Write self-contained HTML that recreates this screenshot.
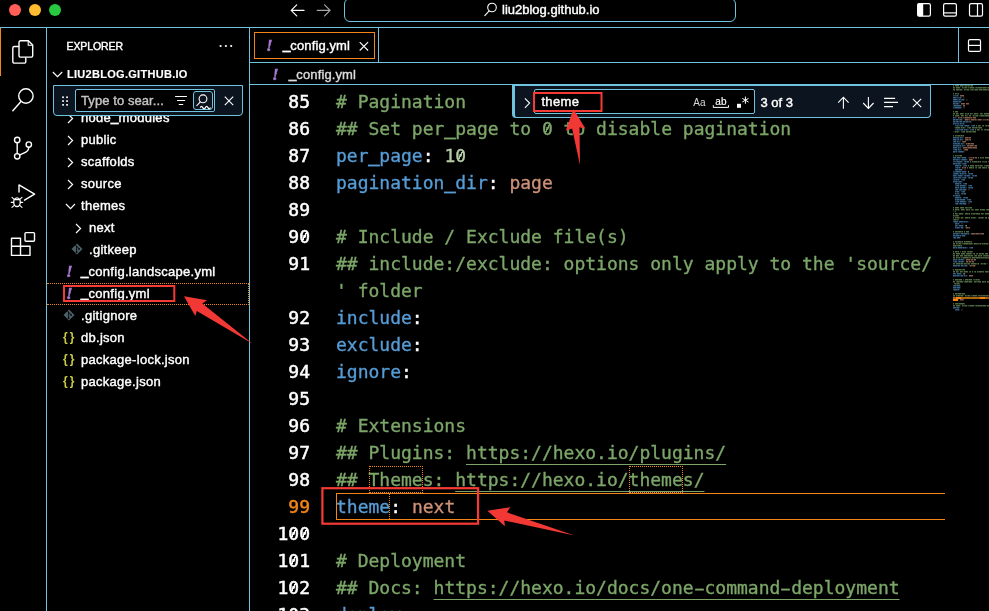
<!DOCTYPE html>
<html lang="en">
<head>
<meta charset="utf-8">
<title>_config.yml — liu2blog.github.io</title>
<style>
*{box-sizing:border-box;margin:0;padding:0}
html,body{width:989px;height:611px;overflow:hidden;background:#000}
#root{position:absolute;left:0;top:0;width:989px;height:611px;will-change:transform;transform:translateZ(0)}
body{position:relative;font-family:"Liberation Sans",sans-serif;font-size:13px;color:#fff;-webkit-font-smoothing:antialiased;-webkit-text-stroke:0.4px}
.abs{position:absolute}
.line{position:absolute;background:#6fc3df}
/* title bar */
.tl{position:absolute;top:4px;width:12px;height:12px;border-radius:50%}
#cmd{position:absolute;left:344px;top:-2px;width:392px;height:24px;border:1px solid #6fc3df;border-radius:6px}
#cmd span{position:absolute;left:157px;top:3px;font-size:13px;white-space:nowrap}
/* sidebar */
.row{position:absolute;left:47px;width:202px;height:22px;line-height:22px;white-space:nowrap}
.row .lbl{position:absolute;top:0;letter-spacing:0.28px}
.ic{position:absolute}
.yml{position:absolute;top:0;font-family:"Liberation Serif",serif;font-style:italic;font-weight:bold;font-size:17px;color:#a978cf;-webkit-text-stroke:0.5px}
.json{position:absolute;top:-1.500px;font-size:12px;font-weight:bold;color:#cbcb41;letter-spacing:-0.2px;-webkit-text-stroke:0}
.us{position:relative;top:-1.500px;-webkit-text-stroke:0.9px}
/* editor */
#code{position:absolute;left:250px;top:85px;width:703px;height:526px;overflow:hidden;font-family:"DejaVu Sans Mono","Liberation Mono",monospace;font-size:18px;line-height:27px;-webkit-text-stroke:0.35px}
.ln{position:absolute;left:0;width:60px;text-align:right;height:27px;color:#fff;-webkit-text-stroke:0.5px}
.cl{position:absolute;left:86px;height:27px;white-space:pre}
.cu{position:relative;top:-0.500px;-webkit-text-stroke:1.100px}
.hy{display:inline-block;font-style:normal;transform:scaleX(1.750);text-decoration:inherit}
.z{font-weight:inherit;background:linear-gradient(to bottom right,transparent 42%,currentColor 42%,currentColor 58%,transparent 58%) 2.900px 6.200px/5px 8.800px no-repeat}
.c{color:#7ca668}.k{color:#569cd6}.s{color:#ce9178}.n{color:#b5cea8}.u{text-decoration:underline;text-underline-offset:5px;text-decoration-thickness:1px;text-decoration-skip-ink:none}
</style>
</head>
<body>
<div id="root">
<!-- TITLE BAR -->
<div class="tl" style="left:9px;background:#ff5f57"></div>
<div class="tl" style="left:29px;background:#febc2e"></div>
<div class="tl" style="left:49px;background:#28c840"></div>
<div id="cmd"><span>liu2blog.github.io</span></div>
<svg class="abs" style="left:286px;top:2px" width="50" height="18" viewBox="286 2 50 18" fill="none" stroke-width="1.2" stroke-linecap="round" stroke-linejoin="round">
<path d="M304 10.400H291.300M296.700 4.900L291.200 10.400L296.700 15.900" stroke="#fff"/>
<path d="M317.300 10.400H330M324.600 4.900L330.100 10.400L324.600 15.900" stroke="#a8a8a8"/>
</svg>
<svg class="abs" style="left:483px;top:1px" width="16" height="17" viewBox="483 1 16 17" fill="none" stroke="#fff" stroke-width="1.100" stroke-linecap="round"><circle cx="492" cy="7.500" r="4.300"/><path d="M489.200 10.800L484.800 15.600"/></svg>
<svg class="abs" style="left:915px;top:1px" width="72" height="18" viewBox="915 1 72 18" fill="none" stroke="#fff" stroke-width="1.200">
<rect x="917.600" y="3.600" width="12.800" height="12.600" rx="1.600"/><path d="M917.600 4.600a1 1 0 0 1 1-1h4.600v12.600h-4.600a1 1 0 0 1-1-1z" fill="#fff" stroke="none"/>
<rect x="943.600" y="3.600" width="12.800" height="12.600" rx="1.600"/><path d="M943.600 12.900h12.800"/>
<rect x="969.500" y="3.600" width="13" height="12.600" rx="1.600"/><path d="M977.500 3.600v12.600"/>
</svg>
<div class="line" style="left:0;top:27px;width:989px;height:1px"></div>

<!-- ACTIVITY BAR -->
<div class="abs" style="left:0;top:28px;width:1px;height:48px;background:#f38518"></div>
<div class="line" style="left:46px;top:28px;width:1px;height:583px"></div>
<svg class="abs" style="left:0;top:28px" width="46" height="250" viewBox="0 28 46 250" fill="none" stroke="#fff" stroke-width="1.4" stroke-linejoin="round" stroke-linecap="round">
<!-- files -->
<path d="M18.7 46.5H14.4a1.6 1.6 0 0 0-1.6 1.6v13.4a1.6 1.6 0 0 0 1.6 1.6h9.8a1.6 1.6 0 0 0 1.6-1.6v-3.6"/>
<path d="M20.6 40.8h7.8l4.3 4.3v10.4a1.6 1.6 0 0 1-1.6 1.6H20.6a1.6 1.6 0 0 1-1.6-1.6V42.4a1.6 1.6 0 0 1 1.600-1.600z"/>
<path d="M28.2 41v4.300h4.300" stroke-width="1.100"/>
<!-- search -->
<circle cx="25.900" cy="96" r="7.200"/>
<path d="M20.800 101.700L12.800 110.700"/>
<!-- source control -->
<circle cx="17.200" cy="140" r="2.700"/>
<circle cx="17.200" cy="156.300" r="2.700"/>
<circle cx="28.800" cy="144.600" r="2.700"/>
<path d="M17.200 142.700v10.900M28.800 147.300c0 4.500-4 5.200-8.900 7.600"/>
<!-- debug -->
<path d="M19 192V184.900L34.600 194.200L24.500 200.200"/>
<ellipse cx="17" cy="202.200" rx="3.300" ry="4.300" stroke-width="1.300"/>
<path d="M14.200 199.300L12 197.300M19.800 199.300L22 197.300M13.600 202.400H11.300M20.400 202.400H22.700M14.300 205.300L12 207.300M19.700 205.300L22 207.300M14.500 199.600h5" stroke-width="1.100"/>
<!-- extensions -->
<path d="M11.500 238.200h9v8h9.500v9.200h-18.500zM20.500 246.200v9.200M11.500 246.200h9"/>
<rect x="25" y="232.600" width="9.500" height="8.700" rx="1"/>
</svg>

<!-- SIDEBAR -->
<div class="abs" style="left:66.500px;top:40px;font-size:10.500px;letter-spacing:-0.1px">EXPLORER</div>
<svg class="abs" style="left:219px;top:44px" width="14" height="4" viewBox="0 0 14 4"><circle cx="1.6" cy="2" r="1.1" fill="#fff"/><circle cx="6.9" cy="2" r="1.1" fill="#fff"/><circle cx="12.2" cy="2" r="1.1" fill="#fff"/></svg>
<svg class="abs" style="left:52px;top:71px" width="11" height="7" viewBox="0 0 11 7"><path d="M.8 1l4.7 4.7L10.2 1" fill="none" stroke="#fff" stroke-width="1.15"/></svg>
<div class="abs" style="left:67px;top:68px;font-size:11px;font-weight:bold;letter-spacing:0.29px;-webkit-text-stroke:0.15px">LIU2BLOG.GITHUB.IO</div>
<!--SIDE-START-->
<div class="row" style="top:107px"><svg class="ic" style="left:20px;top:5.500px" width="7" height="11" viewBox="0 0 7 11"><path d="M1 1l4.6 4.5L1 10" fill="none" stroke="#fff" stroke-width="1.15"/></svg><span class="lbl" style="left:34px">node<span class="us">_</span>modules</span></div>
<div class="row" style="top:129px"><svg class="ic" style="left:20px;top:5.500px" width="7" height="11" viewBox="0 0 7 11"><path d="M1 1l4.6 4.5L1 10" fill="none" stroke="#fff" stroke-width="1.15"/></svg><span class="lbl" style="left:34px">public</span></div>
<div class="row" style="top:151px"><svg class="ic" style="left:20px;top:5.500px" width="7" height="11" viewBox="0 0 7 11"><path d="M1 1l4.6 4.5L1 10" fill="none" stroke="#fff" stroke-width="1.15"/></svg><span class="lbl" style="left:34px">scaffolds</span></div>
<div class="row" style="top:173px"><svg class="ic" style="left:20px;top:5.500px" width="7" height="11" viewBox="0 0 7 11"><path d="M1 1l4.6 4.5L1 10" fill="none" stroke="#fff" stroke-width="1.15"/></svg><span class="lbl" style="left:34px">source</span></div>
<div class="row" style="top:195px"><svg class="ic" style="left:18px;top:8px" width="11" height="7" viewBox="0 0 11 7"><path d="M1 1l4.5 4.6L10 1" fill="none" stroke="#fff" stroke-width="1.15"/></svg><span class="lbl" style="left:34px">themes</span></div>
<div class="row" style="top:217px"><svg class="ic" style="left:28px;top:5.500px" width="7" height="11" viewBox="0 0 7 11"><path d="M1 1l4.6 4.5L1 10" fill="none" stroke="#fff" stroke-width="1.15"/></svg><span class="lbl" style="left:42px">next</span></div>
<div class="row" style="top:239px"><svg class="ic" style="left:23.6px;top:4.300px" width="12" height="12" viewBox="0 0 12 12"><path d="M6 .5L11.500 6 6 11.500.5 6z" fill="#4b6069"/><g stroke="#000" stroke-width=".9" fill="none"><path d="M5.600 2.600V9.200M4.300 1.900L8 5.600"/></g><circle cx="8.100" cy="5.900" r=".9" fill="#000"/><circle cx="5.600" cy="9" r=".9" fill="#000"/></svg><span class="lbl" style="left:42px">.gitkeep</span></div>
<div class="row" style="top:261px"><span class="yml" style="left:19px">!</span><span class="lbl" style="left:34px"><span class="us">_</span>config.landscape.yml</span></div>
<div class="row" style="top:283px"><span class="yml" style="left:19px">!</span><span class="lbl" style="left:34px"><span class="us">_</span>config.yml</span></div>
<div class="row" style="top:305px"><svg class="ic" style="left:15.6px;top:4.300px" width="12" height="12" viewBox="0 0 12 12"><path d="M6 .5L11.500 6 6 11.500.5 6z" fill="#4b6069"/><g stroke="#000" stroke-width=".9" fill="none"><path d="M5.600 2.600V9.200M4.300 1.900L8 5.600"/></g><circle cx="8.100" cy="5.900" r=".9" fill="#000"/><circle cx="5.600" cy="9" r=".9" fill="#000"/></svg><span class="lbl" style="left:34px">.gitignore</span></div>
<div class="row" style="top:327px"><span class="json" style="left:16px">{&#8201;}</span><span class="lbl" style="left:34px">db.json</span></div>
<div class="row" style="top:349px"><span class="json" style="left:16px">{&#8201;}</span><span class="lbl" style="left:34px">package-lock.json</span></div>
<div class="row" style="top:371px"><span class="json" style="left:16px">{&#8201;}</span><span class="lbl" style="left:34px">package.json</span></div>
<!--SIDE-END-->
<div class="abs" style="left:47px;top:283px;width:202px;height:22px;border-top:1px dotted #f38518;border-bottom:1px dotted #f38518;border-right:1px dotted #f38518"></div>
<!-- tree find widget -->
<div class="abs" id="tfind" style="left:53px;top:85px;width:190px;height:31px;background:#0c141f;border:1px solid #6fc3df;border-radius:0 0 4px 4px">
 <div class="abs" style="left:21px;top:3px;width:140px;height:23px;background:#000;border:1px solid #6fc3df;border-radius:2px"></div>
 <div class="abs" style="left:27px;top:7px;color:#c4c4c4;letter-spacing:0.08px;white-space:nowrap">Type to sear...</div>
 <div class="abs" style="left:139px;top:5px;width:20px;height:19px;border:1px solid #6fc3df;border-radius:3px;background:#0c141f"></div>
 <svg class="abs" style="left:0;top:0" width="188" height="29" viewBox="54 86 188 29" fill="none" stroke="#fff" stroke-width="1.100">
  <g fill="#fff" stroke="none"><rect x="62.200" y="96.400" width="1.700" height="1.700"/><rect x="66.200" y="96.400" width="1.700" height="1.700"/><rect x="62.200" y="100.200" width="1.700" height="1.700"/><rect x="66.200" y="100.200" width="1.700" height="1.700"/><rect x="62.200" y="104" width="1.700" height="1.700"/><rect x="66.200" y="104" width="1.700" height="1.700"/></g>
  <path d="M175.100 96.500h11.800M177 100.500h8.200M178.800 104.500h4.400"/>
  <circle cx="203" cy="98.800" r="3.900" stroke-width="1.100"/><path d="M200.300 101.800L196.500 106" stroke-width="1.100"/><path d="M200.200 107.600q1.300-2.400 2.600 0t2.600 0t2.600 0t2.500 0" stroke-width="1.200"/>
  <path d="M224.800 96.700l8.400 8.400M233.200 96.700l-8.400 8.400"/>
 </svg>
</div>
<div class="line" style="left:249px;top:28px;width:1px;height:583px"></div>

<!-- TABS -->
<div class="line" style="left:250px;top:62px;width:739px;height:1px"></div>
<div class="line" style="left:378px;top:28px;width:1px;height:34px"></div>
<div class="line" style="left:958px;top:28px;width:1px;height:34px"></div>
<div class="abs" style="left:254px;top:32px;width:121px;height:27px;border:1px solid #f38518"></div>
<span class="yml" style="left:266px;top:36px">!</span>
<div class="abs" style="left:283px;top:38px;letter-spacing:0.12px"><span class="us">_</span>config.yml</div>
<svg class="abs" style="left:358px;top:41px" width="12" height="11" viewBox="0 0 12 11"><path d="M1.700 1.100l8.400 8.400M10.100 1.100L1.700 9.500" stroke="#fff" stroke-width="1.100" fill="none"/></svg>
<svg class="abs" style="left:966px;top:37px" width="17" height="17" viewBox="966 37 17 17" fill="none" stroke="#fff" stroke-width="1.200"><rect x="968.500" y="39.600" width="12" height="11.800" rx="1.500"/><path d="M968.500 45.400h12"/></svg>
<span class="yml" style="left:272px;top:65px">!</span>
<div class="abs" style="left:289px;top:67px;letter-spacing:0.12px;color:#dcdcdc"><span class="us">_</span>config.yml</div>
<div class="line" style="left:250px;top:84px;width:739px;height:1px"></div>

<!-- CODE -->
<div id="code">
<div class="abs" style="left:86px;top:408px;width:609px;height:27px;border:1px solid #f38518;border-right:none"></div>
<div class="abs" style="left:139px;top:409px;width:1px;height:25px;border-left:1px dotted #f38518"></div>
<div class="abs" style="left:119px;top:381px;width:54px;height:27px;border:1px dotted #f38518"></div>
<div class="abs" style="left:379px;top:381px;width:54px;height:27px;border:1px dotted #f38518"></div>
<!--CODE-START-->
<div class="ln" style="top:3px">85</div>
<div class="cl" style="top:3px"><span class="c"># Pagination</span></div>
<div class="ln" style="top:30px">86</div>
<div class="cl" style="top:30px"><span class="c">## Set per<span class="cu">_</span>page to <b class="z">0</b> to disable pagination</span></div>
<div class="ln" style="top:57px">87</div>
<div class="cl" style="top:57px"><span class="k">per<span class="cu">_</span>page</span>: <span class="n">1<b class="z">0</b></span></div>
<div class="ln" style="top:84px">88</div>
<div class="cl" style="top:84px"><span class="k">pagination<span class="cu">_</span>dir</span>: <span class="s">page</span></div>
<div class="ln" style="top:111px">89</div>
<div class="ln" style="top:138px">9<b class="z">0</b></div>
<div class="cl" style="top:138px"><span class="c"># Include / Exclude file(s)</span></div>
<div class="ln" style="top:165px">91</div>
<div class="cl" style="top:165px"><span class="c">## include:/exclude: options only apply to the 'source/</span></div>
<div class="cl" style="top:192px"><span class="c">' folder</span></div>
<div class="ln" style="top:219px">92</div>
<div class="cl" style="top:219px"><span class="k">include</span>:</div>
<div class="ln" style="top:246px">93</div>
<div class="cl" style="top:246px"><span class="k">exclude</span>:</div>
<div class="ln" style="top:273px">94</div>
<div class="cl" style="top:273px"><span class="k">ignore</span>:</div>
<div class="ln" style="top:300px">95</div>
<div class="ln" style="top:327px">96</div>
<div class="cl" style="top:327px"><span class="c"># Extensions</span></div>
<div class="ln" style="top:354px">97</div>
<div class="cl" style="top:354px"><span class="c">## Plugins: <span class="u">https://hexo.io/plugins/</span></span></div>
<div class="ln" style="top:381px">98</div>
<div class="cl" style="top:381px"><span class="c">## Themes: <span class="u">https://hexo.io/themes/</span></span></div>
<div class="ln" style="top:408px;color:#f38518">99</div>
<div class="cl" style="top:408px"><span class="k">theme</span>: <span class="s">next</span></div>
<div class="ln" style="top:435px">1<b class="z">0</b><b class="z">0</b></div>
<div class="ln" style="top:462px">1<b class="z">0</b>1</div>
<div class="cl" style="top:462px"><span class="c"># Deployment</span></div>
<div class="ln" style="top:489px">1<b class="z">0</b>2</div>
<div class="cl" style="top:489px"><span class="c">## Docs: <span class="u">https://hexo.io/docs/one<i class="hy">-</i>command<i class="hy">-</i>deployment</span></span></div>
<div class="ln" style="top:516px">1<b class="z">0</b>3</div>
<div class="cl" style="top:516px"><span class="k">deploy</span>:</div>
<!--CODE-END-->
</div>

<!-- MINIMAP -->
<!--MINI-START-->
<svg class="abs" style="left:950px;top:85px" width="39" height="526" viewBox="950 85 39 526">
<path d="M953 85h1v1.400h-1zM955 85h4v1.400h-4zM960 85h3v1.400h-3zM965 85h2v1.400h-2zM968 85h1v1.400h-1zM971 85h2v1.400h-2zM953 87h2v1.400h-2zM956 87h4v1.400h-4zM962 87h1v1.400h-1zM965 87h2v1.400h-2zM970 87h4v1.400h-4zM976 87h1v1.400h-1zM978 87h4v1.400h-4zM983 87h3v1.400h-3zM988 87h2v1.400h-2zM953 89h2v1.400h-2zM956 89h3v1.400h-3zM960 89h2v1.400h-2zM964 89h1v1.400h-1zM967 89h2v1.400h-2zM972 89h1v1.400h-1zM975 89h3v1.400h-3zM979 89h3v1.400h-3zM983 89h4v1.400h-4zM988 89h1v1.400h-1zM953 93h1v1.400h-1zM955 93h1v1.400h-1zM958 93h1v1.400h-1zM953 111h1v1.400h-1zM955 111h3v1.400h-3zM953 113h2v1.400h-2zM956 113h2v1.400h-2zM960 113h3v1.400h-3zM965 113h1v1.400h-1zM968 113h1v1.400h-1zM970 113h1v1.400h-1zM974 113h2v1.400h-2zM977 113h1v1.400h-1zM980 113h2v1.400h-2zM984 113h5v1.400h-5zM953 115h1v1.400h-1zM955 115h4v1.400h-4zM961 115h2v1.400h-2zM965 115h1v1.400h-1zM969 115h2v1.400h-2zM973 115h1v1.400h-1zM976 115h2v1.400h-2zM981 115h3v1.400h-3zM985 115h4v1.400h-4zM976 125h1v1.400h-1zM978 125h2v1.400h-2zM983 125h1v1.400h-1zM986 125h1v1.400h-1zM988 125h2v1.400h-2zM956 127h4v1.400h-4zM961 127h1v1.400h-1zM963 127h1v1.400h-1zM969 127h2v1.400h-2zM972 127h2v1.400h-2zM975 127h2v1.400h-2zM979 127h3v1.400h-3zM975 129h1v1.400h-1zM977 129h2v1.400h-2zM982 129h1v1.400h-1zM985 129h1v1.400h-1zM987 129h2v1.400h-2zM955 131h1v1.400h-1zM957 131h1v1.400h-1zM963 131h2v1.400h-2zM966 131h2v1.400h-2zM969 131h2v1.400h-2zM973 131h3v1.400h-3zM953 135h1v1.400h-1zM955 135h1v1.400h-1zM958 135h2v1.400h-2zM961 135h1v1.400h-1zM963 135h1v1.400h-1zM953 155h1v1.400h-1zM955 155h1v1.400h-1zM960 155h2v1.400h-2zM978 157h1v1.400h-1zM980 157h1v1.400h-1zM983 157h1v1.400h-1zM985 157h4v1.400h-4zM970 161h1v1.400h-1zM972 161h1v1.400h-1zM974 161h3v1.400h-3zM978 161h1v1.400h-1zM980 161h1v1.400h-1zM986 161h1v1.400h-1zM968 165h1v1.400h-1zM970 165h4v1.400h-4zM975 165h2v1.400h-2zM978 165h1v1.400h-1zM980 165h2v1.400h-2zM986 165h3v1.400h-3zM967 167h1v1.400h-1zM969 167h3v1.400h-3zM973 167h1v1.400h-1zM976 167h1v1.400h-1zM979 167h2v1.400h-2zM982 167h3v1.400h-3zM986 167h1v1.400h-1zM988 167h1v1.400h-1zM953 207h1v1.400h-1zM955 207h4v1.400h-4zM960 207h4v1.400h-4zM965 207h2v1.400h-2zM970 207h2v1.400h-2zM953 209h1v1.400h-1zM955 209h2v1.400h-2zM958 209h1v1.400h-1zM961 209h3v1.400h-3zM966 209h2v1.400h-2zM969 209h1v1.400h-1zM972 209h1v1.400h-1zM975 209h3v1.400h-3zM980 209h1v1.400h-1zM982 209h3v1.400h-3zM987 209h4v1.400h-4zM953 213h1v1.400h-1zM955 213h2v1.400h-2zM959 213h4v1.400h-4zM965 213h3v1.400h-3zM969 213h1v1.400h-1zM971 213h1v1.400h-1zM973 213h2v1.400h-2zM976 213h4v1.400h-4zM981 213h2v1.400h-2zM985 213h4v1.400h-4zM953 215h1v1.400h-1zM956 215h2v1.400h-2zM953 217h1v1.400h-1zM955 217h1v1.400h-1zM957 217h2v1.400h-2zM961 217h2v1.400h-2zM965 217h3v1.400h-3zM969 217h1v1.400h-1zM971 217h1v1.400h-1zM973 217h2v1.400h-2zM979 217h1v1.400h-1zM981 217h2v1.400h-2zM985 217h2v1.400h-2zM988 217h2v1.400h-2zM954 219h2v1.400h-2zM953 231h1v1.400h-1zM955 231h2v1.400h-2zM958 231h3v1.400h-3zM962 231h1v1.400h-1zM964 231h1v1.400h-1zM966 231h3v1.400h-3zM953 241h1v1.400h-1zM955 241h2v1.400h-2zM958 241h3v1.400h-3zM962 241h1v1.400h-1zM964 241h1v1.400h-1zM966 241h4v1.400h-4zM971 241h1v1.400h-1zM953 243h2v1.400h-2zM956 243h1v1.400h-1zM959 243h2v1.400h-2zM964 243h4v1.400h-4zM969 243h3v1.400h-3zM974 243h3v1.400h-3zM980 243h1v1.400h-1zM982 243h1v1.400h-1zM984 243h1v1.400h-1zM986 243h2v1.400h-2zM953 245h3v1.400h-3zM958 245h2v1.400h-2zM961 245h1v1.400h-1zM953 251h1v1.400h-1zM955 251h2v1.400h-2zM958 251h1v1.400h-1zM962 251h1v1.400h-1zM964 251h2v1.400h-2zM968 251h1v1.400h-1zM970 251h2v1.400h-2zM953 253h2v1.400h-2zM956 253h4v1.400h-4zM961 253h4v1.400h-4zM966 253h5v1.400h-5zM974 253h1v1.400h-1zM977 253h1v1.400h-1zM979 253h2v1.400h-2zM982 253h2v1.400h-2zM985 253h3v1.400h-3zM953 255h2v1.400h-2zM956 255h3v1.400h-3zM960 255h3v1.400h-3zM964 255h3v1.400h-3zM968 255h2v1.400h-2zM971 255h2v1.400h-2zM975 255h2v1.400h-2zM978 255h2v1.400h-2zM981 255h1v1.400h-1zM984 255h1v1.400h-1zM986 255h2v1.400h-2zM953 257h2v1.400h-2zM956 257h1v1.400h-1zM959 257h1v1.400h-1zM963 257h5v1.400h-5zM970 257h1v1.400h-1zM972 257h3v1.400h-3zM976 257h4v1.400h-4zM981 257h1v1.400h-1zM983 257h1v1.400h-1zM985 257h2v1.400h-2zM988 257h2v1.400h-2zM953 263h2v1.400h-2zM956 263h4v1.400h-4zM961 263h2v1.400h-2zM964 263h2v1.400h-2zM968 263h2v1.400h-2zM971 263h5v1.400h-5zM978 263h1v1.400h-1zM981 263h1v1.400h-1zM984 263h2v1.400h-2zM953 269h1v1.400h-1zM955 269h3v1.400h-3zM959 269h2v1.400h-2zM963 269h2v1.400h-2zM953 271h2v1.400h-2zM956 271h2v1.400h-2zM960 271h2v1.400h-2zM964 271h4v1.400h-4zM970 271h1v1.400h-1zM972 271h1v1.400h-1zM975 271h1v1.400h-1zM977 271h1v1.400h-1zM979 271h3v1.400h-3zM983 271h1v1.400h-1zM985 271h3v1.400h-3zM953 279h1v1.400h-1zM955 279h3v1.400h-3zM959 279h3v1.400h-3zM965 279h3v1.400h-3zM969 279h3v1.400h-3zM976 279h1v1.400h-1zM978 279h1v1.400h-1zM953 281h2v1.400h-2zM957 281h2v1.400h-2zM960 281h3v1.400h-3zM965 281h3v1.400h-3zM969 281h3v1.400h-3zM974 281h2v1.400h-2zM978 281h3v1.400h-3zM982 281h2v1.400h-2zM985 281h1v1.400h-1zM987 281h3v1.400h-3zM955 283h1v1.400h-1zM957 283h2v1.400h-2zM953 293h1v1.400h-1zM955 293h2v1.400h-2zM958 293h3v1.400h-3zM962 293h3v1.400h-3zM953 295h2v1.400h-2zM956 295h1v1.400h-1zM958 295h2v1.400h-2zM961 295h2v1.400h-2zM965 295h1v1.400h-1zM968 295h2v1.400h-2zM973 295h4v1.400h-4zM979 295h1v1.400h-1zM981 295h1v1.400h-1zM983 295h2v1.400h-2zM986 295h2v1.400h-2zM953 297h2v1.400h-2zM956 297h6v1.400h-6zM964 297h1v1.400h-1zM967 297h2v1.400h-2zM972 297h4v1.400h-4zM978 297h1v1.400h-1zM981 297h5v1.400h-5zM953 303h1v1.400h-1zM955 303h3v1.400h-3zM959 303h5v1.400h-5zM953 305h2v1.400h-2zM956 305h4v1.400h-4zM962 305h1v1.400h-1zM965 305h2v1.400h-2zM970 305h4v1.400h-4zM976 305h1v1.400h-1zM978 305h4v1.400h-4zM983 305h3v1.400h-3zM987 305h7v1.400h-7z" fill="#7ca668" opacity="0.62"/>
<path d="M963 85h2v1.400h-2zM967 85h1v1.400h-1zM969 85h2v1.400h-2zM963 87h2v1.400h-2zM968 87h2v1.400h-2zM975 87h1v1.400h-1zM977 87h1v1.400h-1zM982 87h1v1.400h-1zM986 87h2v1.400h-2zM959 89h1v1.400h-1zM965 89h2v1.400h-2zM970 89h2v1.400h-2zM973 89h2v1.400h-2zM982 89h1v1.400h-1zM987 89h1v1.400h-1zM956 93h2v1.400h-2zM958 113h1v1.400h-1zM963 113h1v1.400h-1zM966 113h2v1.400h-2zM971 113h2v1.400h-2zM976 113h1v1.400h-1zM982 113h1v1.400h-1zM963 115h1v1.400h-1zM966 115h2v1.400h-2zM974 115h2v1.400h-2zM979 115h2v1.400h-2zM984 115h1v1.400h-1zM980 125h1v1.400h-1zM982 125h1v1.400h-1zM985 125h1v1.400h-1zM987 125h1v1.400h-1zM955 127h1v1.400h-1zM962 127h1v1.400h-1zM964 127h1v1.400h-1zM967 127h2v1.400h-2zM974 127h1v1.400h-1zM977 127h2v1.400h-2zM979 129h1v1.400h-1zM981 129h1v1.400h-1zM984 129h1v1.400h-1zM986 129h1v1.400h-1zM956 131h1v1.400h-1zM958 131h1v1.400h-1zM961 131h2v1.400h-2zM968 131h1v1.400h-1zM971 131h2v1.400h-2zM956 135h2v1.400h-2zM960 135h1v1.400h-1zM962 135h1v1.400h-1zM956 155h4v1.400h-4zM981 157h2v1.400h-2zM973 161h1v1.400h-1zM977 161h1v1.400h-1zM979 161h1v1.400h-1zM982 161h4v1.400h-4zM988 161h1v1.400h-1zM977 165h1v1.400h-1zM979 165h1v1.400h-1zM982 165h1v1.400h-1zM984 165h2v1.400h-2zM972 167h1v1.400h-1zM975 167h1v1.400h-1zM978 167h1v1.400h-1zM985 167h1v1.400h-1zM967 207h3v1.400h-3zM957 209h1v1.400h-1zM964 209h1v1.400h-1zM968 209h1v1.400h-1zM971 209h1v1.400h-1zM973 209h1v1.400h-1zM978 209h1v1.400h-1zM981 209h1v1.400h-1zM986 209h1v1.400h-1zM955 211h1v1.400h-1zM957 213h1v1.400h-1zM968 213h1v1.400h-1zM972 213h1v1.400h-1zM975 213h1v1.400h-1zM983 213h1v1.400h-1zM954 215h2v1.400h-2zM958 215h1v1.400h-1zM956 217h1v1.400h-1zM959 217h1v1.400h-1zM968 217h1v1.400h-1zM972 217h1v1.400h-1zM975 217h1v1.400h-1zM978 217h1v1.400h-1zM980 217h1v1.400h-1zM983 217h1v1.400h-1zM953 219h1v1.400h-1zM956 219h3v1.400h-3zM957 231h1v1.400h-1zM961 231h1v1.400h-1zM957 241h1v1.400h-1zM961 241h1v1.400h-1zM965 241h1v1.400h-1zM970 241h1v1.400h-1zM957 243h2v1.400h-2zM962 243h2v1.400h-2zM968 243h1v1.400h-1zM972 243h1v1.400h-1zM977 243h3v1.400h-3zM983 243h1v1.400h-1zM985 243h1v1.400h-1zM956 245h2v1.400h-2zM960 245h1v1.400h-1zM957 251h1v1.400h-1zM960 251h1v1.400h-1zM963 251h1v1.400h-1zM967 251h1v1.400h-1zM969 251h1v1.400h-1zM972 251h1v1.400h-1zM971 253h1v1.400h-1zM973 253h1v1.400h-1zM976 253h1v1.400h-1zM981 253h1v1.400h-1zM967 255h1v1.400h-1zM970 255h1v1.400h-1zM974 255h1v1.400h-1zM980 255h1v1.400h-1zM983 255h1v1.400h-1zM985 255h1v1.400h-1zM988 255h1v1.400h-1zM957 257h2v1.400h-2zM961 257h2v1.400h-2zM968 257h2v1.400h-2zM975 257h1v1.400h-1zM980 257h1v1.400h-1zM982 257h1v1.400h-1zM984 257h1v1.400h-1zM987 257h1v1.400h-1zM960 263h1v1.400h-1zM966 263h2v1.400h-2zM976 263h2v1.400h-2zM982 263h2v1.400h-2zM958 269h1v1.400h-1zM961 269h2v1.400h-2zM958 271h1v1.400h-1zM962 271h1v1.400h-1zM969 271h1v1.400h-1zM974 271h1v1.400h-1zM978 271h1v1.400h-1zM982 271h1v1.400h-1zM988 271h1v1.400h-1zM958 279h1v1.400h-1zM963 279h1v1.400h-1zM968 279h1v1.400h-1zM973 279h3v1.400h-3zM977 279h1v1.400h-1zM979 279h1v1.400h-1zM956 281h1v1.400h-1zM959 281h1v1.400h-1zM964 281h1v1.400h-1zM968 281h1v1.400h-1zM976 281h2v1.400h-2zM984 281h1v1.400h-1zM954 283h1v1.400h-1zM956 283h1v1.400h-1zM959 283h1v1.400h-1zM957 293h1v1.400h-1zM961 293h1v1.400h-1zM957 295h1v1.400h-1zM960 295h1v1.400h-1zM966 295h2v1.400h-2zM971 295h2v1.400h-2zM978 295h1v1.400h-1zM980 295h1v1.400h-1zM982 295h1v1.400h-1zM985 295h1v1.400h-1zM988 295h1v1.400h-1zM965 297h2v1.400h-2zM970 297h2v1.400h-2zM977 297h1v1.400h-1zM979 297h2v1.400h-2zM986 297h1v1.400h-1zM958 303h1v1.400h-1zM964 303h1v1.400h-1zM963 305h2v1.400h-2zM968 305h2v1.400h-2zM975 305h1v1.400h-1zM977 305h1v1.400h-1zM982 305h1v1.400h-1z" fill="#7ca668" opacity="0.42"/>
<path d="M960 87h1v1.400h-1zM967 87h1v1.400h-1zM974 87h1v1.400h-1zM962 89h1v1.400h-1zM969 89h1v1.400h-1zM978 89h1v1.400h-1zM978 113h1v1.400h-1zM959 115h1v1.400h-1zM972 115h1v1.400h-1zM978 115h1v1.400h-1zM954 127h1v1.400h-1zM960 127h1v1.400h-1zM965 127h1v1.400h-1zM953 131h2v1.400h-2zM959 131h1v1.400h-1zM959 209h1v1.400h-1zM953 211h2v1.400h-2zM958 213h1v1.400h-1zM963 213h1v1.400h-1zM960 217h1v1.400h-1zM963 217h1v1.400h-1zM976 217h1v1.400h-1zM961 243h1v1.400h-1zM973 243h1v1.400h-1zM981 243h1v1.400h-1zM988 243h1v1.400h-1zM972 253h1v1.400h-1zM960 257h1v1.400h-1zM971 257h1v1.400h-1zM963 263h1v1.400h-1zM980 263h1v1.400h-1zM986 263h2v1.400h-2zM963 271h1v1.400h-1zM963 281h1v1.400h-1zM972 281h1v1.400h-1zM963 295h1v1.400h-1zM970 295h1v1.400h-1zM977 295h1v1.400h-1zM962 297h1v1.400h-1zM969 297h1v1.400h-1zM976 297h1v1.400h-1zM960 305h1v1.400h-1zM967 305h1v1.400h-1zM974 305h1v1.400h-1zM986 305h1v1.400h-1z" fill="#7ca668" opacity="0.20"/>
<path d="M953 95h4v1.400h-4zM956 97h4v1.400h-4zM957 99h2v1.400h-2zM960 99h2v1.400h-2zM958 101h1v1.400h-1zM955 103h1v1.400h-1zM958 103h1v1.400h-1zM953 105h1v1.400h-1zM953 107h2v1.400h-2zM954 117h2v1.400h-2zM955 119h1v1.400h-1zM958 119h2v1.400h-2zM955 121h1v1.400h-1zM958 121h2v1.400h-2zM965 121h1v1.400h-1zM968 121h2v1.400h-2zM954 123h1v1.400h-1zM956 123h2v1.400h-2zM961 123h2v1.400h-2zM955 125h2v1.400h-2zM958 125h3v1.400h-3zM964 125h1v1.400h-1zM971 125h2v1.400h-2zM955 129h2v1.400h-2zM958 129h3v1.400h-3zM965 129h1v1.400h-1zM967 129h1v1.400h-1zM970 129h2v1.400h-2zM956 137h1v1.400h-1zM961 137h2v1.400h-2zM956 139h2v1.400h-2zM961 139h2v1.400h-2zM953 141h1v1.400h-1zM958 141h2v1.400h-2zM954 143h1v1.400h-1zM957 143h1v1.400h-1zM962 143h2v1.400h-2zM955 145h1v1.400h-1zM959 145h1v1.400h-1zM963 145h2v1.400h-2zM959 147h2v1.400h-2zM953 149h2v1.400h-2zM959 149h2v1.400h-2zM955 151h1v1.400h-1zM958 151h1v1.400h-1zM963 151h1v1.400h-1zM960 157h1v1.400h-1zM955 159h1v1.400h-1zM958 159h2v1.400h-2zM961 159h1v1.400h-1zM966 159h1v1.400h-1zM953 161h4v1.400h-4zM964 161h1v1.400h-1zM966 161h1v1.400h-1zM955 163h1v1.400h-1zM957 163h1v1.400h-1zM960 163h1v1.400h-1zM962 163h2v1.400h-2zM959 165h1v1.400h-1zM963 165h2v1.400h-2zM955 167h2v1.400h-2zM958 167h1v1.400h-1zM958 169h1v1.400h-1zM953 171h3v1.400h-3zM953 173h1v1.400h-1zM958 173h1v1.400h-1zM961 173h1v1.400h-1zM963 173h2v1.400h-2zM968 173h1v1.400h-1zM970 173h1v1.400h-1zM956 175h1v1.400h-1zM962 175h1v1.400h-1zM964 175h1v1.400h-1zM966 175h1v1.400h-1zM969 175h1v1.400h-1zM972 175h1v1.400h-1zM974 175h1v1.400h-1zM953 177h1v1.400h-1zM955 177h1v1.400h-1zM957 177h2v1.400h-2zM962 177h2v1.400h-2zM968 177h1v1.400h-1zM970 177h1v1.400h-1zM953 179h1v1.400h-1zM955 179h1v1.400h-1zM957 179h1v1.400h-1zM961 179h2v1.400h-2zM954 181h1v1.400h-1zM957 181h2v1.400h-2zM961 181h1v1.400h-1zM959 183h1v1.400h-1zM963 183h2v1.400h-2zM955 185h2v1.400h-2zM965 185h1v1.400h-1zM968 185h2v1.400h-2zM957 187h1v1.400h-1zM962 187h1v1.400h-1zM965 187h1v1.400h-1zM968 187h1v1.400h-1zM970 187h1v1.400h-1zM955 189h1v1.400h-1zM959 189h1v1.400h-1zM962 189h1v1.400h-1zM956 191h1v1.400h-1zM961 191h2v1.400h-2zM956 193h2v1.400h-2zM961 193h1v1.400h-1zM963 193h1v1.400h-1zM954 195h2v1.400h-2zM958 195h1v1.400h-1zM959 197h1v1.400h-1zM963 197h1v1.400h-1zM965 197h1v1.400h-1zM956 199h1v1.400h-1zM959 199h1v1.400h-1zM967 199h2v1.400h-2zM955 201h2v1.400h-2zM965 201h1v1.400h-1zM968 201h2v1.400h-2zM955 203h1v1.400h-1zM959 203h1v1.400h-1zM962 203h1v1.400h-1zM953 221h1v1.400h-1zM963 221h1v1.400h-1zM965 221h1v1.400h-1zM967 221h1v1.400h-1zM957 223h1v1.400h-1zM957 225h1v1.400h-1zM956 227h1v1.400h-1zM959 227h1v1.400h-1zM955 233h1v1.400h-1zM958 233h2v1.400h-2zM963 233h1v1.400h-1zM967 233h1v1.400h-1zM955 235h1v1.400h-1zM959 235h1v1.400h-1zM953 237h1v1.400h-1zM955 247h1v1.400h-1zM962 247h1v1.400h-1zM964 247h1v1.400h-1zM966 247h1v1.400h-1zM969 247h2v1.400h-2zM955 259h1v1.400h-1zM958 259h1v1.400h-1zM960 259h1v1.400h-1zM963 259h1v1.400h-1zM953 261h2v1.400h-2zM958 261h1v1.400h-1zM960 261h1v1.400h-1zM963 261h1v1.400h-1zM957 265h1v1.400h-1zM963 265h2v1.400h-2zM955 273h1v1.400h-1zM956 275h1v1.400h-1zM959 275h2v1.400h-2zM965 275h2v1.400h-2zM953 285h1v1.400h-1zM956 285h1v1.400h-1zM956 287h1v1.400h-1zM953 289h1v1.400h-1zM957 289h1v1.400h-1zM953 299h1v1.400h-1zM956 307h1v1.400h-1zM955 309h1v1.400h-1z" fill="#569cd6" opacity="0.42"/>
<path d="M957 95h1v1.400h-1zM953 97h3v1.400h-3zM960 97h1v1.400h-1zM953 99h4v1.400h-4zM959 99h1v1.400h-1zM962 99h2v1.400h-2zM953 101h5v1.400h-5zM959 101h2v1.400h-2zM953 103h2v1.400h-2zM956 103h2v1.400h-2zM954 105h7v1.400h-7zM955 107h6v1.400h-6zM953 117h1v1.400h-1zM953 119h2v1.400h-2zM956 119h2v1.400h-2zM960 119h2v1.400h-2zM953 121h2v1.400h-2zM956 121h2v1.400h-2zM960 121h2v1.400h-2zM963 121h2v1.400h-2zM966 121h2v1.400h-2zM970 121h1v1.400h-1zM953 123h1v1.400h-1zM955 123h1v1.400h-1zM958 123h1v1.400h-1zM960 123h1v1.400h-1zM963 123h1v1.400h-1zM957 125h1v1.400h-1zM961 125h2v1.400h-2zM965 125h4v1.400h-4zM973 125h2v1.400h-2zM957 129h1v1.400h-1zM961 129h2v1.400h-2zM964 129h1v1.400h-1zM966 129h1v1.400h-1zM972 129h2v1.400h-2zM953 137h3v1.400h-3zM957 137h2v1.400h-2zM960 137h1v1.400h-1zM953 139h3v1.400h-3zM958 139h1v1.400h-1zM960 139h1v1.400h-1zM954 141h2v1.400h-2zM957 141h1v1.400h-1zM953 143h1v1.400h-1zM955 143h2v1.400h-2zM958 143h2v1.400h-2zM961 143h1v1.400h-1zM953 145h2v1.400h-2zM956 145h3v1.400h-3zM960 145h1v1.400h-1zM962 145h1v1.400h-1zM953 147h4v1.400h-4zM958 147h1v1.400h-1zM955 149h2v1.400h-2zM958 149h1v1.400h-1zM953 151h2v1.400h-2zM956 151h1v1.400h-1zM959 151h4v1.400h-4zM953 157h3v1.400h-3zM957 157h3v1.400h-3zM962 157h4v1.400h-4zM953 159h2v1.400h-2zM956 159h2v1.400h-2zM962 159h4v1.400h-4zM957 161h5v1.400h-5zM965 161h1v1.400h-1zM967 161h2v1.400h-2zM953 163h2v1.400h-2zM956 163h1v1.400h-1zM958 163h2v1.400h-2zM964 163h2v1.400h-2zM955 165h4v1.400h-4zM960 165h1v1.400h-1zM965 165h2v1.400h-2zM957 167h1v1.400h-1zM959 167h1v1.400h-1zM955 169h3v1.400h-3zM959 169h3v1.400h-3zM956 171h5v1.400h-5zM962 171h4v1.400h-4zM954 173h4v1.400h-4zM960 173h1v1.400h-1zM962 173h1v1.400h-1zM965 173h1v1.400h-1zM969 173h1v1.400h-1zM971 173h2v1.400h-2zM953 175h3v1.400h-3zM958 175h4v1.400h-4zM965 175h1v1.400h-1zM967 175h2v1.400h-2zM973 175h1v1.400h-1zM975 175h2v1.400h-2zM954 177h1v1.400h-1zM956 177h1v1.400h-1zM959 177h2v1.400h-2zM964 177h2v1.400h-2zM969 177h1v1.400h-1zM971 177h2v1.400h-2zM954 179h1v1.400h-1zM956 179h1v1.400h-1zM958 179h1v1.400h-1zM963 179h2v1.400h-2zM953 181h1v1.400h-1zM955 181h2v1.400h-2zM959 181h2v1.400h-2zM955 183h4v1.400h-4zM960 183h1v1.400h-1zM965 183h2v1.400h-2zM957 185h2v1.400h-2zM960 185h5v1.400h-5zM970 185h2v1.400h-2zM955 187h2v1.400h-2zM958 187h1v1.400h-1zM960 187h2v1.400h-2zM963 187h2v1.400h-2zM969 187h1v1.400h-1zM971 187h2v1.400h-2zM956 189h2v1.400h-2zM960 189h2v1.400h-2zM963 189h3v1.400h-3zM955 191h1v1.400h-1zM957 191h2v1.400h-2zM963 191h2v1.400h-2zM955 193h1v1.400h-1zM958 193h1v1.400h-1zM962 193h1v1.400h-1zM964 193h2v1.400h-2zM953 195h1v1.400h-1zM956 195h2v1.400h-2zM959 195h1v1.400h-1zM955 197h4v1.400h-4zM960 197h1v1.400h-1zM964 197h1v1.400h-1zM966 197h2v1.400h-2zM955 199h1v1.400h-1zM957 199h2v1.400h-2zM960 199h5v1.400h-5zM969 199h2v1.400h-2zM957 201h2v1.400h-2zM960 201h5v1.400h-5zM970 201h2v1.400h-2zM956 203h2v1.400h-2zM960 203h2v1.400h-2zM963 203h3v1.400h-3zM954 221h4v1.400h-4zM959 221h4v1.400h-4zM964 221h1v1.400h-1zM966 221h1v1.400h-1zM955 223h2v1.400h-2zM958 223h1v1.400h-1zM955 225h2v1.400h-2zM959 225h4v1.400h-4zM955 227h1v1.400h-1zM957 227h2v1.400h-2zM961 227h2v1.400h-2zM953 233h2v1.400h-2zM956 233h2v1.400h-2zM961 233h2v1.400h-2zM964 233h3v1.400h-3zM968 233h1v1.400h-1zM953 235h2v1.400h-2zM956 235h3v1.400h-3zM960 235h1v1.400h-1zM962 235h3v1.400h-3zM954 237h2v1.400h-2zM957 237h3v1.400h-3zM953 247h2v1.400h-2zM956 247h1v1.400h-1zM958 247h4v1.400h-4zM963 247h1v1.400h-1zM965 247h1v1.400h-1zM971 247h2v1.400h-2zM953 259h2v1.400h-2zM956 259h1v1.400h-1zM959 259h1v1.400h-1zM961 259h2v1.400h-2zM955 261h2v1.400h-2zM959 261h1v1.400h-1zM961 261h2v1.400h-2zM953 265h4v1.400h-4zM958 265h2v1.400h-2zM961 265h2v1.400h-2zM965 265h2v1.400h-2zM953 273h2v1.400h-2zM957 273h4v1.400h-4zM953 275h3v1.400h-3zM957 275h2v1.400h-2zM961 275h2v1.400h-2zM964 275h1v1.400h-1zM954 285h2v1.400h-2zM957 285h3v1.400h-3zM953 287h3v1.400h-3zM957 287h3v1.400h-3zM954 289h3v1.400h-3zM958 289h1v1.400h-1zM954 299h4v1.400h-4zM953 307h3v1.400h-3zM957 307h2v1.400h-2zM956 309h3v1.400h-3z" fill="#569cd6" opacity="0.62"/>
<path d="M958 95h1v1.400h-1zM961 97h1v1.400h-1zM964 99h1v1.400h-1zM961 101h1v1.400h-1zM959 103h1v1.400h-1zM961 105h1v1.400h-1zM961 107h1v1.400h-1zM956 117h1v1.400h-1zM962 119h1v1.400h-1zM971 121h1v1.400h-1zM964 123h1v1.400h-1zM969 125h1v1.400h-1zM968 129h1v1.400h-1zM963 137h1v1.400h-1zM963 139h1v1.400h-1zM960 141h1v1.400h-1zM964 143h1v1.400h-1zM965 145h1v1.400h-1zM961 147h1v1.400h-1zM961 149h1v1.400h-1zM964 151h1v1.400h-1zM966 157h1v1.400h-1zM967 159h1v1.400h-1zM962 161h1v1.400h-1zM966 163h1v1.400h-1zM961 165h1v1.400h-1zM960 167h1v1.400h-1zM962 169h1v1.400h-1zM966 171h1v1.400h-1zM966 173h1v1.400h-1zM970 175h1v1.400h-1zM966 177h1v1.400h-1zM959 179h1v1.400h-1zM962 181h1v1.400h-1zM961 183h1v1.400h-1zM966 185h1v1.400h-1zM966 187h1v1.400h-1zM966 189h1v1.400h-1zM959 191h1v1.400h-1zM959 193h1v1.400h-1zM960 195h1v1.400h-1zM961 197h1v1.400h-1zM965 199h1v1.400h-1zM966 201h1v1.400h-1zM966 203h1v1.400h-1zM968 221h1v1.400h-1zM959 223h1v1.400h-1zM963 225h1v1.400h-1zM963 227h1v1.400h-1zM969 233h1v1.400h-1zM965 235h1v1.400h-1zM960 237h1v1.400h-1zM967 247h1v1.400h-1zM964 259h1v1.400h-1zM964 261h1v1.400h-1zM967 265h1v1.400h-1zM961 273h1v1.400h-1zM967 275h1v1.400h-1zM960 285h1v1.400h-1zM960 287h1v1.400h-1zM959 289h1v1.400h-1zM958 299h1v1.400h-1zM959 307h1v1.400h-1zM959 309h1v1.400h-1z" fill="#ffffff" opacity="0.12"/>
<path d="M960 95h4v1.400h-4zM961 103h4v1.400h-4zM966 103h3v1.400h-3zM963 105h2v1.400h-2zM958 117h1v1.400h-1zM961 117h1v1.400h-1zM965 117h5v1.400h-5zM971 117h1v1.400h-1zM973 117h3v1.400h-3zM965 119h3v1.400h-3zM971 119h3v1.400h-3zM975 119h1v1.400h-1zM978 119h3v1.400h-3zM987 119h1v1.400h-1zM965 137h3v1.400h-3zM969 137h2v1.400h-2zM965 139h3v1.400h-3zM970 139h1v1.400h-1zM963 141h3v1.400h-3zM966 143h1v1.400h-1zM968 143h2v1.400h-2zM971 143h3v1.400h-3zM967 145h2v1.400h-2zM970 145h3v1.400h-3zM975 145h2v1.400h-2zM963 147h4v1.400h-4zM968 147h4v1.400h-4zM973 147h4v1.400h-4zM965 149h3v1.400h-3zM973 157h1v1.400h-1zM975 157h2v1.400h-2zM969 159h3v1.400h-3zM962 167h1v1.400h-1zM965 167h1v1.400h-1zM966 227h2v1.400h-2zM969 227h1v1.400h-1zM971 233h4v1.400h-4zM976 233h3v1.400h-3zM981 233h3v1.400h-3zM966 259h4v1.400h-4zM971 259h2v1.400h-2zM974 259h2v1.400h-2zM966 261h2v1.400h-2zM969 261h2v1.400h-2zM972 261h2v1.400h-2zM970 265h1v1.400h-1zM973 265h2v1.400h-2zM969 275h4v1.400h-4zM960 299h3v1.400h-3z" fill="#ce9178" opacity="0.62"/>
<path d="M963 97h2v1.400h-2zM966 99h2v1.400h-2zM963 107h2v1.400h-2zM962 117h1v1.400h-1zM972 117h1v1.400h-1zM964 119h1v1.400h-1zM970 119h1v1.400h-1zM977 119h1v1.400h-1zM982 119h1v1.400h-1zM963 149h1v1.400h-1zM968 157h1v1.400h-1zM974 157h1v1.400h-1zM964 169h2v1.400h-2zM968 189h2v1.400h-2zM968 203h2v1.400h-2zM961 223h2v1.400h-2zM965 227h1v1.400h-1zM970 259h1v1.400h-1zM973 259h1v1.400h-1zM968 261h1v1.400h-1zM971 261h1v1.400h-1zM969 265h1v1.400h-1zM975 265h1v1.400h-1zM961 309h2v1.400h-2z" fill="#ce9178" opacity="0.20"/>
<path d="M959 117h2v1.400h-2zM963 117h2v1.400h-2zM970 117h1v1.400h-1zM968 119h2v1.400h-2zM974 119h1v1.400h-1zM976 119h1v1.400h-1zM981 119h1v1.400h-1zM983 119h4v1.400h-4zM988 119h1v1.400h-1zM968 137h1v1.400h-1zM968 139h2v1.400h-2zM962 141h1v1.400h-1zM967 143h1v1.400h-1zM970 143h1v1.400h-1zM969 145h1v1.400h-1zM973 145h2v1.400h-2zM967 147h1v1.400h-1zM972 147h1v1.400h-1zM964 149h1v1.400h-1zM969 157h4v1.400h-4zM972 159h1v1.400h-1zM963 167h2v1.400h-2zM968 227h1v1.400h-1zM975 233h1v1.400h-1zM979 233h2v1.400h-2zM971 265h2v1.400h-2zM963 299h1v1.400h-1z" fill="#ce9178" opacity="0.42"/>
<path d="M962 121h1v1.400h-1zM959 123h1v1.400h-1zM963 125h1v1.400h-1zM963 129h1v1.400h-1zM959 137h1v1.400h-1zM959 139h1v1.400h-1zM956 141h1v1.400h-1zM960 143h1v1.400h-1zM961 145h1v1.400h-1zM957 147h1v1.400h-1zM957 149h1v1.400h-1zM957 151h1v1.400h-1zM956 157h1v1.400h-1zM961 157h1v1.400h-1zM960 159h1v1.400h-1zM961 163h1v1.400h-1zM961 171h1v1.400h-1zM959 173h1v1.400h-1zM957 175h1v1.400h-1zM963 175h1v1.400h-1zM961 177h1v1.400h-1zM959 185h1v1.400h-1zM959 187h1v1.400h-1zM958 189h1v1.400h-1zM959 201h1v1.400h-1zM958 203h1v1.400h-1zM958 221h1v1.400h-1zM958 225h1v1.400h-1zM960 227h1v1.400h-1zM960 233h1v1.400h-1zM961 235h1v1.400h-1zM956 237h1v1.400h-1zM957 247h1v1.400h-1zM957 259h1v1.400h-1zM957 261h1v1.400h-1zM960 265h1v1.400h-1zM956 273h1v1.400h-1zM963 275h1v1.400h-1z" fill="#569cd6" opacity="0.20"/>
<path d="M968 171h1v1.400h-1zM966 225h1v1.400h-1zM964 273h1v1.400h-1z" fill="#b5cea8" opacity="0.62"/>
<path d="M965 225h1v1.400h-1zM963 273h1v1.400h-1z" fill="#b5cea8" opacity="0.42"/>
<rect x="953" y="297.0" width="36" height="2" fill="#c46c0c" opacity=".85"/>
<rect x="956" y="297.0" width="5" height="2" fill="#f38518"/>
<rect x="980" y="297.0" width="5" height="2" fill="#f38518"/>
<rect x="953" y="299.0" width="5" height="2" fill="#f38518"/>
</svg>
<!--MINI-END-->
<!-- FIND WIDGET -->
<div class="abs" id="find" style="left:512px;top:85px;width:419px;height:33px;background:#0c141f;border:1px solid #6fc3df;border-left-width:3px;border-radius:0 0 4px 4px">
 <div class="abs" style="left:19px;top:3px;width:221px;height:25px;background:#000;border:1px solid #6fc3df;border-radius:2px"></div>
 <div class="abs" style="left:26.400px;top:8px;letter-spacing:0.35px">theme</div>
 <div class="abs" style="left:178.300px;top:11px;font-size:10px;color:#d8d8d8;letter-spacing:0px;-webkit-text-stroke:0">Aa</div>
 <div class="abs" style="left:200.300px;top:10px;font-size:10px;color:#fff;letter-spacing:0.2px;-webkit-text-stroke:0.15px">ab</div>
 <div class="abs" style="left:245.500px;top:9px">3 of 3</div>
 <svg class="abs" style="left:0;top:0" width="415" height="31" viewBox="515 86 415 31" fill="none" stroke="#fff" stroke-width="1.100">
  <path d="M524.900 98.300l4.700 4.800l-4.700 4.800"/>
  <path d="M713.300 105.200v2.200h15.200v-2.200" stroke-width="1"/>
  <rect x="737" y="103.800" width="4" height="4" fill="#fff" stroke="none"/>
  <path d="M745.400 96.600v7.200M742.300 98.400l6.200 3.600M748.500 98.400l-6.200 3.600" stroke-width="1"/>
  <path d="M843.400 108.700V97.200M838.200 102.700l5.200-5.500l5.200 5.500"/>
  <path d="M868.400 97V108.500M863.200 103l5.200 5.500l5.200-5.500"/>
  <path d="M884.100 98.400h11M884.100 102.400h13.900M884.100 106.600h8.900"/>
  <path d="M912.800 98.800l8.400 8.400M921.200 98.800l-8.400 8.400"/>
 </svg>
</div>
<!-- ANNOTATIONS -->
<svg class="abs" style="left:0;top:0" width="989" height="611" viewBox="0 0 989 611">
<g fill="none" stroke="#f63a36" stroke-width="2">
<rect x="64" y="286" width="110.300" height="15"/>
<rect x="534" y="93" width="67.500" height="18"/>
<rect x="322.400" y="488.200" width="155.700" height="35.500" stroke-width="2.200"/>
</g>
<g fill="#f23834">
<polygon points="184,296.2 207.1,300.2 202.300,303.600 252.600,343.700 196.800,310.900 195.300,315.900"/>
<polygon points="573.400,109.200 585.600,128.800 579.500,127.200 580,165 572.100,128.500 565.800,130.700"/>
<polygon points="487.400,510.800 510.300,507.100 507,512.300 574.500,535.500 504.300,520.400 504.900,526.300"/>
</g>
</svg>
</div>
</body>
</html>
